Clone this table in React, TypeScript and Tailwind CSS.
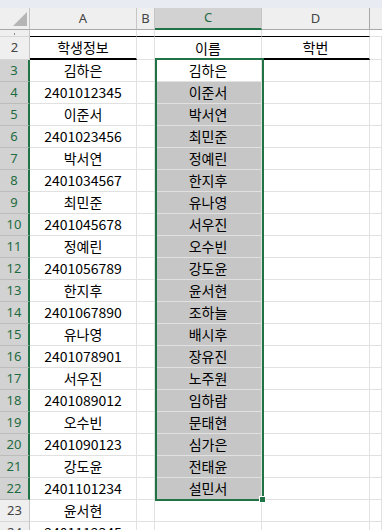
import React from 'react';

const A_COL = [
  '김하은', '2401012345', '이준서', '2401023456', '박서연', '2401034567',
  '최민준', '2401045678', '정예린', '2401056789', '한지후', '2401067890',
  '유나영', '2401078901', '서우진', '2401089012', '오수빈', '2401090123',
  '강도윤', '2401101234', '윤서현', '2401112345',
];

const C_COL = [
  '김하은', '이준서', '박서연', '최민준', '정예린', '한지후', '유나영', '서우진',
  '오수빈', '강도윤', '윤서현', '조하늘', '배시후', '장유진', '노주원', '임하람',
  '문태현', '심가은', '전태윤', '설민서',
];

const cell = "shrink-0 flex items-center justify-center border-r border-b border-[#e1e1e1] text-[14px] text-black font-['Noto_Sans_CJK_KR',sans-serif]";

function Row({ n, a, c }: { n: number; a: string; c: string }) {
  const sel = n >= 3 && n <= 22;
  const shaded = n >= 4 && n <= 22;
  return (
    <div className="flex h-[22px] shrink-0">
      <div
        className={`w-[30px] shrink-0 flex items-center justify-center text-[13px] font-['Noto_Sans',sans-serif] border-b ${
          sel
            ? 'bg-[#d2d2d2] text-[#1e6b41] border-r-2 border-r-[#217346] border-b-[#bcbcbc]'
            : 'bg-[#efefef] text-[#444] border-r border-r-[#c6c6c6] border-b-[#d6d6d6]'
        }`}
      >
        {n}
      </div>
      <div className={`${cell} w-[107px]`}>{a}</div>
      <div className={`${cell} w-[18px]`} />
      <div className={`${cell} w-[107px] ${shaded ? 'bg-[#c6c6c6] border-[#b2b2b2]' : ''}`}>{c}</div>
      <div className={`${cell} w-[108px]`} />
      <div className={`${cell} flex-1`} />
    </div>
  );
}

export default function App() {
  return (
    <div className="relative w-[382px] h-[530px] overflow-hidden bg-white flex flex-col">
      {/* strip of the formula bar above */}
      <div className="h-[8px] shrink-0 bg-[#e8ebf1]" />

      {/* column headers */}
      <div className="flex h-[22px] shrink-0 bg-[#efefef] text-[13px] text-[#444] font-['Noto_Sans',sans-serif]">
        <div className="relative w-[30px] shrink-0 border-r border-b border-r-[#c6c6c6] border-b-[#a8a8a8]">
          <svg className="absolute left-[13px] top-[4px]" width="14" height="14" viewBox="0 0 14 14">
            <polygon points="14,0 14,14 0,14" fill="#b5b5b5" />
          </svg>
        </div>
        <div className="w-[107px] shrink-0 flex items-center justify-center border-r border-b border-r-[#c6c6c6] border-b-[#a8a8a8]">A</div>
        <div className="w-[18px] shrink-0 flex items-center justify-center border-r border-b border-r-[#c6c6c6] border-b-[#a8a8a8]">B</div>
        <div className="w-[107px] shrink-0 flex items-center justify-center bg-[#d2d2d2] text-[#1e6b41] border-r border-r-[#c6c6c6] border-b-2 border-b-[#217346]">C</div>
        <div className="w-[108px] shrink-0 flex items-center justify-center border-r border-b border-r-[#a8a8a8] border-b-[#a8a8a8]">D</div>
        <div className="flex-1 border-b border-b-[#a8a8a8]" />
      </div>

      {/* row 1, mostly scrolled out of view */}
      <div className="flex h-[7px] shrink-0">
        <div className="w-[30px] shrink-0 bg-[#efefef] border-r border-b border-r-[#c6c6c6] border-b-[#d6d6d6] flex justify-center items-end overflow-hidden">
          <span className="block w-[1px] h-[2px] bg-[#8a8a8a] mb-[1px]" />
        </div>
        <div className="w-[107px] shrink-0 border-r border-r-[#e1e1e1] border-b border-b-black" />
        <div className="w-[18px] shrink-0 border-r border-r-[#e1e1e1] border-b border-b-black" />
        <div className="w-[107px] shrink-0 border-r border-r-[#e1e1e1] border-b border-b-black" />
        <div className="w-[108px] shrink-0 border-r border-r-[#e1e1e1] border-b border-b-black" />
        <div className="flex-1 border-b border-[#e1e1e1]" />
      </div>

      {/* row 2: headings */}
      <div className="flex h-[23px] shrink-0">
        <div className="w-[30px] shrink-0 flex items-center justify-center bg-[#efefef] text-[13px] text-[#444] font-['Noto_Sans',sans-serif] border-r border-b border-r-[#c6c6c6] border-b-[#d6d6d6]">2</div>
        <div className={`${cell} w-[107px] border-b-2 border-b-black`}>학생정보</div>
        <div className={`${cell} w-[18px]`} />
        <div className={`${cell} w-[107px]`}>이름</div>
        <div className={`${cell} w-[108px] border-b-2 border-b-black`}>학번</div>
        <div className={`${cell} flex-1`} />
      </div>

      {A_COL.map((a, i) => (
        <Row key={i} n={i + 3} a={a} c={C_COL[i] ?? ''} />
      ))}

      {/* selection C3:C22 */}
      <div className="absolute left-[155px] top-[58px] w-[109px] h-[443px] border-2 border-[#217346] pointer-events-none" />
      <div className="absolute left-[259px] top-[496px] w-[7px] h-[7px] bg-[#217346] border border-white" />
    </div>
  );
}
